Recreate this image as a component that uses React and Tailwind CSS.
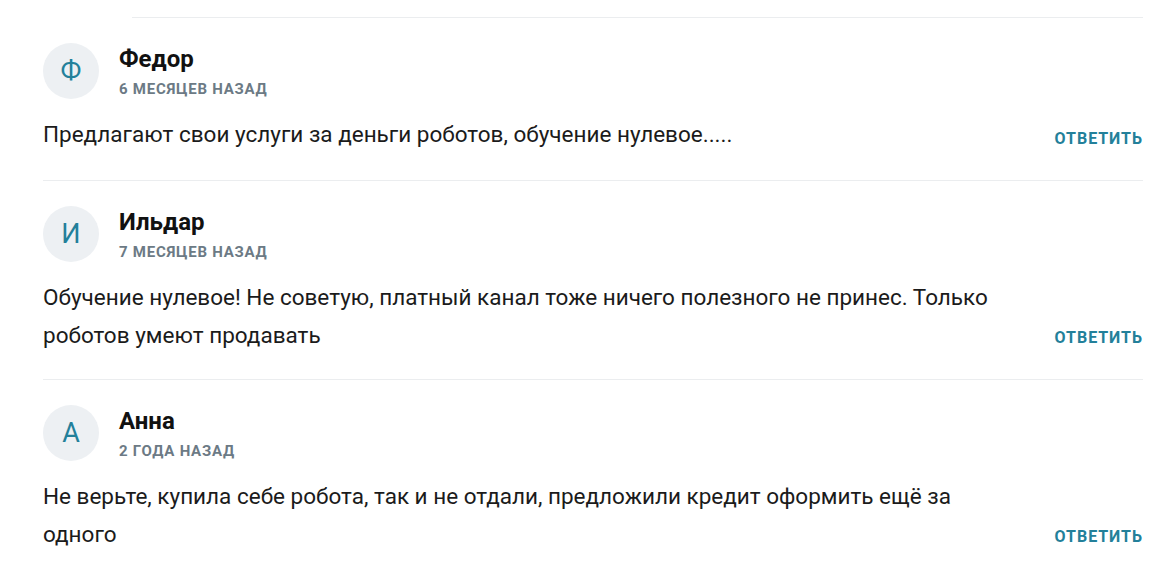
import React from 'react';

const comments = [
    {
        id: 1,
        letter: 'Ф',
        name: 'Федор',
        date: '6 месяцев назад',
        text: 'Предлагают свои услуги за деньги роботов, обучение нулевое.....',
    },
    {
        id: 2,
        letter: 'И',
        name: 'Ильдар',
        date: '7 месяцев назад',
        text: 'Обучение нулевое! Не советую, платный канал тоже ничего полезного не принес. Только роботов умеют продавать',
    },
    {
        id: 3,
        letter: 'А',
        name: 'Анна',
        date: '2 года назад',
        text: 'Не верьте, купила себе робота, так и не отдали, предложили кредит оформить ещё за одного',
    },
];

const Comment = ({ c, last }) => {
    return (
        <div className={`pt-[25px] pb-[25px] ${last ? '' : 'border-b border-[#ebedef]'}`}>
            <div className="flex gap-[20px]">
                <div className="w-[56px] h-[56px] rounded-full bg-[#edf0f3] flex items-center justify-center shrink-0">
                    <span className="text-[27px] text-[#23809a] leading-none">{c.letter}</span>
                </div>
                <div className="pt-[2px]">
                    <p className="text-[24px] leading-[28px] font-bold text-[#111]">{c.name}</p>
                    <p className="mt-[6px] text-[15px] leading-[20px] font-bold uppercase tracking-[0.05em] text-[#6c7a85]">{c.date}</p>
                </div>
            </div>
            <div className="flex items-end justify-between gap-3 mt-[16px]">
                <p className="self-start w-[965px] text-[22.5px] leading-[38px] text-[#1b1b1b]">{c.text}</p>
                <button className="h-[40px] pt-[14px] pb-[6px] text-[16px] leading-[20px] font-bold uppercase tracking-[0.06em] text-[#23809a]">Ответить</button>
            </div>
        </div>
    );
};

const App = () => {
    return (
        <div className="bg-white min-h-screen pl-[43px] pr-[10px] pt-[17px]" style={{ fontFamily: 'Roboto, "Noto Sans", sans-serif' }}>
            <div className="ml-[89px] border-t border-[#ebedef]"></div>
            {comments.map((c, i) => (
                <Comment key={c.id} c={c} last={i === comments.length - 1} />
            ))}
        </div>
    );
};

export default App;
